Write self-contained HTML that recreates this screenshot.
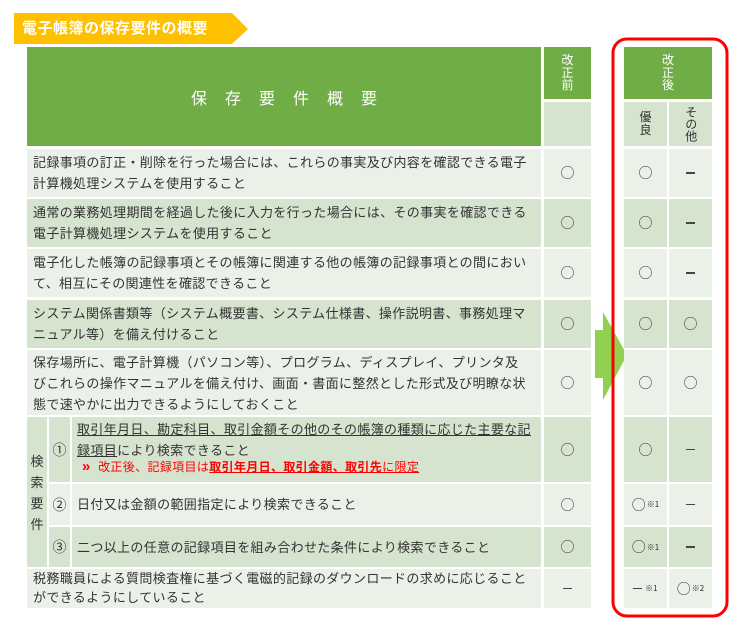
<!DOCTYPE html>
<html><head><meta charset="utf-8"><style>
body{margin:0;width:746px;height:628px;background:#fff;position:relative;overflow:hidden;font-family:"Liberation Sans","Noto Sans CJK JP",sans-serif;color:#333}
div{position:absolute;box-sizing:border-box}
.g{background:#70ad47;color:#fff}
.d{background:#d6e3ce}
.l{background:#ebf0e8}
.t{font-size:13px;line-height:21px;left:33px;letter-spacing:0.35px;white-space:nowrap}
.c{font-family:"Noto Sans CJK JP",sans-serif;font-size:14px;text-align:center;display:flex;align-items:center;justify-content:center}
.v{writing-mode:vertical-rl;font-size:12px;display:flex;align-items:center;justify-content:center;line-height:1.05}
small{font-size:8px;margin-left:1px}
u{text-decoration:underline}
.m{display:inline-block;width:9px;height:1.3px;background:#444;vertical-align:middle}
</style></head><body>
<svg style="position:absolute;left:0;top:0" width="746" height="628">
<polygon points="14,13 232,13 248,29 232,44 14,44" fill="#ffc000"/>
<polygon points="595,330 603,330 603,312 627,355 603,400 603,378 595,378" fill="#92d050"/>
<rect x="613" y="39" width="114" height="577" rx="14" fill="none" stroke="#f00" stroke-width="3"/>
</svg>
<div style="left:22px;top:17px;font-size:15px;font-weight:bold;color:#fff;letter-spacing:0.5px">電子帳簿の保存要件の概要</div>

<div class="g c" style="left:27px;top:47px;width:514px;height:99px;font-size:16px;letter-spacing:18px;padding-left:18px">保存要件概要</div>
<div class="g v" style="left:544px;top:47px;width:47px;height:52px;writing-mode:horizontal-tb;flex-direction:column">改<br>正<br>前</div>
<div class="d" style="left:544px;top:102px;width:47px;height:44px"></div>
<div class="g v" style="left:624px;top:47px;width:88px;height:52px;writing-mode:horizontal-tb;flex-direction:column">改<br>正<br>後</div>
<div class="d v" style="left:624px;top:102px;width:43px;height:44px;writing-mode:horizontal-tb;flex-direction:column">優<br>良</div>
<div class="d v" style="left:669px;top:102px;width:43px;height:44px">その他</div>

<div class="l" style="left:27px;top:149px;width:514px;height:48px"></div>
<div class="t" style="top:152px">記録事項の訂正・削除を行った場合には、これらの事実及び内容を確認できる電子<br>計算機処理システムを使用すること</div>
<div class="d" style="left:27px;top:199px;width:514px;height:48px"></div>
<div class="t" style="top:202px">通常の業務処理期間を経過した後に入力を行った場合には、その事実を確認できる<br>電子計算機処理システムを使用すること</div>
<div class="l" style="left:27px;top:249px;width:514px;height:48px"></div>
<div class="t" style="top:252px">電子化した帳簿の記録事項とその帳簿に関連する他の帳簿の記録事項との間におい<br>て、相互にその関連性を確認できること</div>
<div class="d" style="left:27px;top:300px;width:514px;height:48px"></div>
<div class="t" style="top:303px">システム関係書類等（システム概要書、システム仕様書、操作説明書、事務処理マ<br>ニュアル等）を備え付けること</div>
<div class="l" style="left:27px;top:350px;width:514px;height:65px"></div>
<div class="t" style="top:352px">保存場所に、電子計算機（パソコン等）、プログラム、ディスプレイ、プリンタ及<br>びこれらの操作マニュアルを備え付け、画面・書面に整然とした形式及び明瞭な状<br>態で速やかに出力できるようにしておくこと</div>
<div class="d" style="left:27px;top:417px;width:20px;height:150px"></div>
<div class="v" style="left:27px;top:440px;width:20px;height:105px;writing-mode:horizontal-tb;flex-direction:column;font-size:13px;line-height:21px">検<br>索<br>要<br>件</div>
<div class="d c" style="left:49px;top:417px;width:21px;height:65px">①</div>
<div class="d" style="left:72px;top:417px;width:469px;height:65px"></div>
<div class="t" style="left:77px;top:419px"><u>取引年月日、勘定科目、取引金額その他のその帳簿の種類に応じた主要な記</u><br><u>録項目</u>により検索できること</div>
<div class="t" style="left:82px;top:458px;font-size:12px;color:#f00;line-height:18px"><b style="font-size:15px">»</b>&nbsp; 改正後、記録項目は<u><b>取引年月日、取引金額、取引先</b>に限定</u></div>
<div class="l c" style="left:49px;top:484px;width:21px;height:41px">②</div>
<div class="l" style="left:72px;top:484px;width:469px;height:41px"></div>
<div class="t" style="left:77px;top:494px">日付又は金額の範囲指定により検索できること</div>
<div class="d c" style="left:49px;top:527px;width:21px;height:40px">③</div>
<div class="d" style="left:72px;top:527px;width:469px;height:40px"></div>
<div class="t" style="left:77px;top:537px">二つ以上の任意の記録項目を組み合わせた条件により検索できること</div>
<div class="l" style="left:27px;top:569px;width:514px;height:39px"></div>
<div class="t" style="top:569px;line-height:19px">税務職員による質問検査権に基づく電磁的記録のダウンロードの求めに応じること<br>ができるようにしていること</div>

<div class="l c" style="left:544px;top:149px;width:47px;height:48px">○</div>
<div class="d c" style="left:544px;top:199px;width:47px;height:48px">○</div>
<div class="l c" style="left:544px;top:249px;width:47px;height:48px">○</div>
<div class="d c" style="left:544px;top:300px;width:47px;height:48px">○</div>
<div class="l c" style="left:544px;top:350px;width:47px;height:65px">○</div>
<div class="d c" style="left:544px;top:417px;width:47px;height:65px">○</div>
<div class="l c" style="left:544px;top:484px;width:47px;height:41px">○</div>
<div class="d c" style="left:544px;top:527px;width:47px;height:40px">○</div>
<div class="l c" style="left:544px;top:569px;width:47px;height:39px"><span class="m"></span></div>

<div class="l c" style="left:624px;top:149px;width:43px;height:48px">○</div>
<div class="l c" style="left:669px;top:149px;width:43px;height:48px"><span class="m"></span></div>
<div class="d c" style="left:624px;top:199px;width:43px;height:48px">○</div>
<div class="d c" style="left:669px;top:199px;width:43px;height:48px"><span class="m"></span></div>
<div class="l c" style="left:624px;top:249px;width:43px;height:48px">○</div>
<div class="l c" style="left:669px;top:249px;width:43px;height:48px"><span class="m"></span></div>
<div class="d c" style="left:624px;top:300px;width:43px;height:48px">○</div>
<div class="d c" style="left:669px;top:300px;width:43px;height:48px">○</div>
<div class="l c" style="left:624px;top:350px;width:43px;height:65px">○</div>
<div class="l c" style="left:669px;top:350px;width:43px;height:65px">○</div>
<div class="d c" style="left:624px;top:417px;width:43px;height:65px">○</div>
<div class="d c" style="left:669px;top:417px;width:43px;height:65px"><span class="m"></span></div>
<div class="l c" style="left:624px;top:484px;width:43px;height:41px">○<small>※1</small></div>
<div class="l c" style="left:669px;top:484px;width:43px;height:41px"><span class="m"></span></div>
<div class="d c" style="left:624px;top:527px;width:43px;height:40px">○<small>※1</small></div>
<div class="d c" style="left:669px;top:527px;width:43px;height:40px"><span class="m"></span></div>
<div class="l c" style="left:624px;top:569px;width:43px;height:39px"><span class="m"></span><small>&nbsp;※1</small></div>
<div class="l c" style="left:669px;top:569px;width:43px;height:39px">○<small>※2</small></div>
</body></html>
